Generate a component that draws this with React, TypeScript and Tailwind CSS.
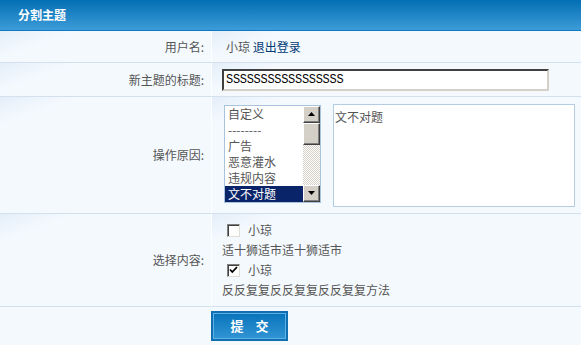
import React from 'react';

const font = { fontFamily: '"Noto Sans CJK SC", "Liberation Sans", sans-serif' };

const cellBg =
  'bg-[linear-gradient(160deg,#e4eef9_0px,#f4f9fe_26px,#f4f9fe_100%)]';

function Row({
  label,
  height,
  children,
  last,
}: {
  label: string;
  height: string;
  children: React.ReactNode;
  last?: boolean;
}) {
  return (
    <div className={`flex ${height} ${last ? '' : 'border-b border-[#d3e1ee]'}`}>
      <div
        className={`w-[211px] shrink-0 flex items-center justify-end pr-[7px] text-[12px] text-[#555] ${cellBg}`}
      >
        {label}
      </div>
      <div className="w-px bg-[#fcfeff]" />
      <div className={`flex-1 flex items-center ${cellBg}`}>{children}</div>
    </div>
  );
}

function Arrow({ up }: { up?: boolean }) {
  return (
    <div className="w-[17px] h-[17px] bg-[#d4d0c8] border border-t-white border-l-white border-r-[#404040] border-b-[#404040] flex items-center justify-center shadow-[inset_-1px_-1px_0_#808080]">
      <svg width="7" height="4" viewBox="0 0 7 4">
        {up ? <polygon points="3.5,0 7,4 0,4" fill="#000" /> : <polygon points="0,0 7,0 3.5,4" fill="#000" />}
      </svg>
    </div>
  );
}

function Check({ checked }: { checked?: boolean }) {
  return (
    <div className="w-[13px] h-[13px] bg-white border border-t-[#808080] border-l-[#808080] border-r-[#e0ddd6] border-b-[#e0ddd6] shadow-[inset_1px_1px_0_#404040] flex items-center justify-center">
      {checked && (
        <svg width="9" height="8" viewBox="0 0 9 8">
          <path d="M1 3.5 L3.3 6 L8 1" stroke="#000" strokeWidth="1.8" fill="none" />
        </svg>
      )}
    </div>
  );
}

export default function App() {
  const reasons = ['自定义', '--------', '广告', '恶意灌水', '违规内容', '文不对题'];
  return (
    <div className="w-[581px] h-[345px] bg-[#f4f9fe] overflow-hidden" style={font}>
      <div className="h-[31px] border-b border-[#0c7ac2] bg-[linear-gradient(#036fb4,#3d9cd8)] flex items-center pl-[18px]">
        <span className="text-white font-bold text-[12px]">分割主题</span>
      </div>

      <Row label="用户名:" height="h-[32px]">
        <span className="pl-[14px] text-[12px] text-[#555]">
          小琼 <a className="text-[#003a75]">退出登录</a>
        </span>
      </Row>

      <Row label="新主题的标题:" height="h-[34px]">
        <div className="ml-[10px] w-[327px] h-[22px] bg-white border-2 border-t-[#404040] border-l-[#404040] border-r-[#d4d0c8] border-b-[#d4d0c8] flex items-center pl-[2px] text-[12px] text-black font-['Liberation_Mono',monospace] tracking-[-0.3px]">
          SSSSSSSSSSSSSSSSS
        </div>
      </Row>

      <Row label="操作原因:" height="h-[117px]">
        <div className="flex items-start gap-[12px] pl-[12px]">
          <div className="mt-[1px] w-[97px] h-[98px] border border-[#a8c3dc] bg-white flex">
            <div className="flex-1 overflow-hidden">
              {reasons.map((r) => (
                <div
                  key={r}
                  className={`h-[16px] leading-[16px] pl-[3px] text-[12px] ${
                    r === '文不对题' ? 'bg-[#0a246a] text-white' : 'text-[#555]'
                  }`}
                >
                  {r}
                </div>
              ))}
            </div>
            <div className="w-[17px] flex flex-col bg-[repeating-conic-gradient(#d4d0c8_0_25%,#fff_0_50%)] bg-[length:2px_2px]">
              <Arrow up />
              <div className="w-[17px] h-[22px] bg-[#d4d0c8] border border-t-white border-l-white border-r-[#404040] border-b-[#404040] shadow-[inset_-1px_-1px_0_#808080]" />
              <div className="flex-1" />
              <Arrow />
            </div>
          </div>
          <div className="w-[242px] h-[103px] border border-[#b5cde4] bg-white text-[12px] text-[#555] leading-[20px] pt-[2px] pl-[1px]">
            文不对题
          </div>
        </div>
      </Row>

      <Row label="选择内容:" height="h-[93px]">
        <div className="pl-[10px] text-[12px] text-[#555] flex flex-col">
          <div className="flex items-center h-[20px] pl-[5px] gap-[8px]">
            <Check />
            <span>小琼</span>
          </div>
          <div className="h-[20px] leading-[20px]">适十狮适市适十狮适市</div>
          <div className="flex items-center h-[20px] pl-[5px] gap-[8px]">
            <Check checked />
            <span>小琼</span>
          </div>
          <div className="h-[20px] leading-[20px]">反反复复反反复复反反复复方法</div>
        </div>
      </Row>

      <div className="flex pt-[4px] pl-[211px]">
        <div className="w-[77px] h-[30px] border border-[#0f6fb2] p-px bg-[#0f6fb2]">
          <div className="w-full h-full border border-[#5fb0e4] bg-[linear-gradient(#0a74bb,#2f94d4)] flex items-center justify-center text-white font-bold text-[13px] tracking-[12px] pl-[12px]">
            提交
          </div>
        </div>
      </div>
    </div>
  );
}
